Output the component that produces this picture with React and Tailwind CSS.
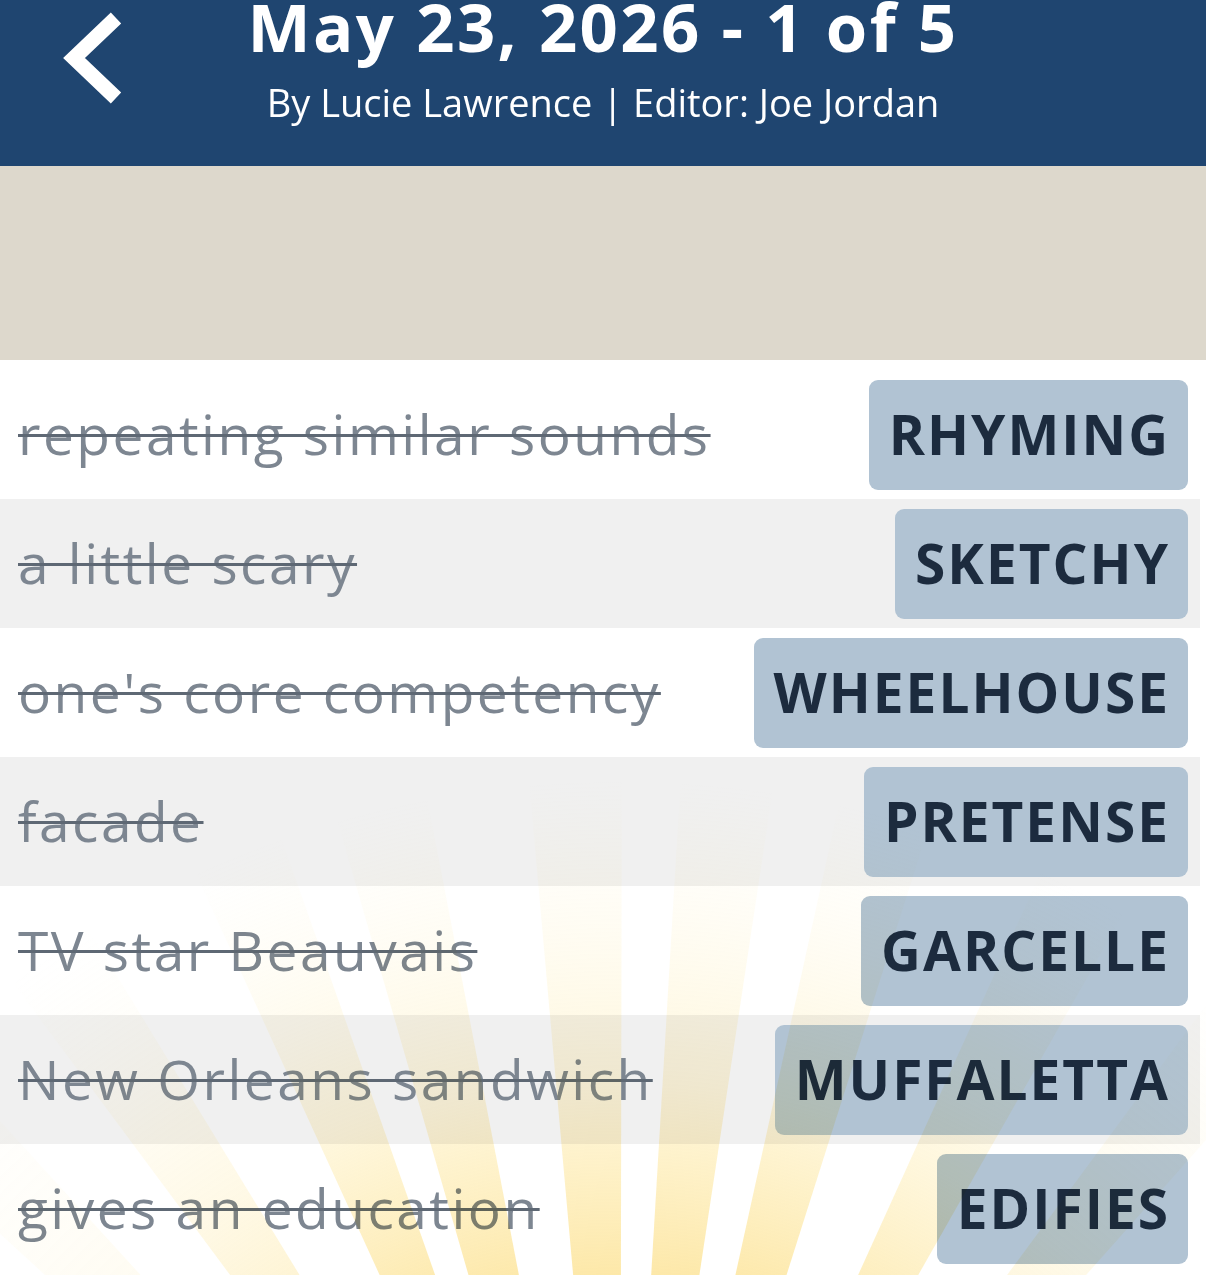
import React from "react";

const rows = [
  { clue: "repeating similar sounds", answer: "RHYMING" },
  { clue: "a little scary", answer: "SKETCHY" },
  { clue: "one's core competency", answer: "WHEELHOUSE" },
  { clue: "facade", answer: "PRETENSE" },
  { clue: "TV star Beauvais", answer: "GARCELLE" },
  { clue: "New Orleans sandwich", answer: "MUFFALETTA" },
  { clue: "gives an education", answer: "EDIFIES" },
];

function Rays() {
  const cx = 620;
  const cy = 1800;
  const rays = [
    [-45, 0.35],
    [-34, 0.7],
    [-22, 1],
    [-13.5, 1],
    [-2.5, 1],
    [6, 1],
    [15, 1],
    [27, 0.9],
    [39, 0.6],
  ];
  const half = 2.6;
  const R = 2000;
  const pt = (a) => {
    const r = (a * Math.PI) / 180;
    return [cx + R * Math.sin(r), cy - R * Math.cos(r)];
  };
  return (
    <svg
      className="pointer-events-none absolute inset-0 mix-blend-multiply"
      width="1206"
      height="1275"
      viewBox="0 0 1206 1275"
    >
      <defs>
        <radialGradient id="fade" cx={cx} cy={cy} r="1020" gradientUnits="userSpaceOnUse">
          <stop offset="0" stopColor="#fbd35a" stopOpacity="0.7" />
          <stop offset="0.5" stopColor="#fbd35a" stopOpacity="0.55" />
          <stop offset="0.7" stopColor="#fde07e" stopOpacity="0.28" />
          <stop offset="1" stopColor="#fff3c4" stopOpacity="0" />
        </radialGradient>
      </defs>
      {rays.map(([a, o], i) => {
        const [x1, y1] = pt(a - half);
        const [x2, y2] = pt(a + half);
        return (
          <polygon
            key={i}
            points={`${cx},${cy} ${x1},${y1} ${x2},${y2}`}
            fill="url(#fade)"
            opacity={o}
          />
        );
      })}
    </svg>
  );
}

export default function App() {
  return (
    <div
      className="relative h-[1275px] w-[1206px] overflow-hidden bg-white"
      style={{ fontFamily: '"Open Sans", "Noto Sans", sans-serif' }}
    >
      <header className="flex h-[166px] items-start bg-[#1f4570] text-white">
        <div className="flex h-full w-[200px] shrink-0 items-start pl-[60px] pt-[12px]">
          <svg width="66" height="92" viewBox="0 0 66 92">
            <polyline
              points="56,6 14,46 56,86"
              fill="none"
              stroke="white"
              strokeWidth="15"
              strokeLinejoin="miter"
              strokeLinecap="butt"
            />
          </svg>
        </div>
        <div className="-ml-[200px] flex flex-1 flex-col items-center">
          <div className="-mt-[14px] text-[67px] font-bold leading-[80px] tracking-[2.4px]">
            May 23, 2026 - 1 of 5
          </div>
          <div className="mt-[14px] text-[38px] leading-[44px]">
            By Lucie Lawrence | Editor: Joe Jordan
          </div>
        </div>
      </header>
      <div className="h-[194px] bg-[#ddd8cc]" />
      <div className="mr-[6px] pt-[10px]">
        {rows.map((r, i) => (
          <div
            key={r.answer}
            className={`flex h-[129px] items-center justify-between pl-[18px] pr-[12px] ${
              i % 2 === 1 ? "bg-[#f0f0f0]" : "bg-white"
            }`}
          >
            <span className="text-[55px] tracking-[2.5px] text-[#7d8691] line-through decoration-[#5e6874] decoration-[3px]">
              {r.clue}
            </span>
            <span className="flex h-[110px] items-center rounded-[9px] bg-[#b1c3d3] pl-[20px] pr-[18px] text-[55px] font-bold tracking-[2px] text-[#1c2b3e]">
              {r.answer}
            </span>
          </div>
        ))}
      </div>
      <Rays />
    </div>
  );
}
